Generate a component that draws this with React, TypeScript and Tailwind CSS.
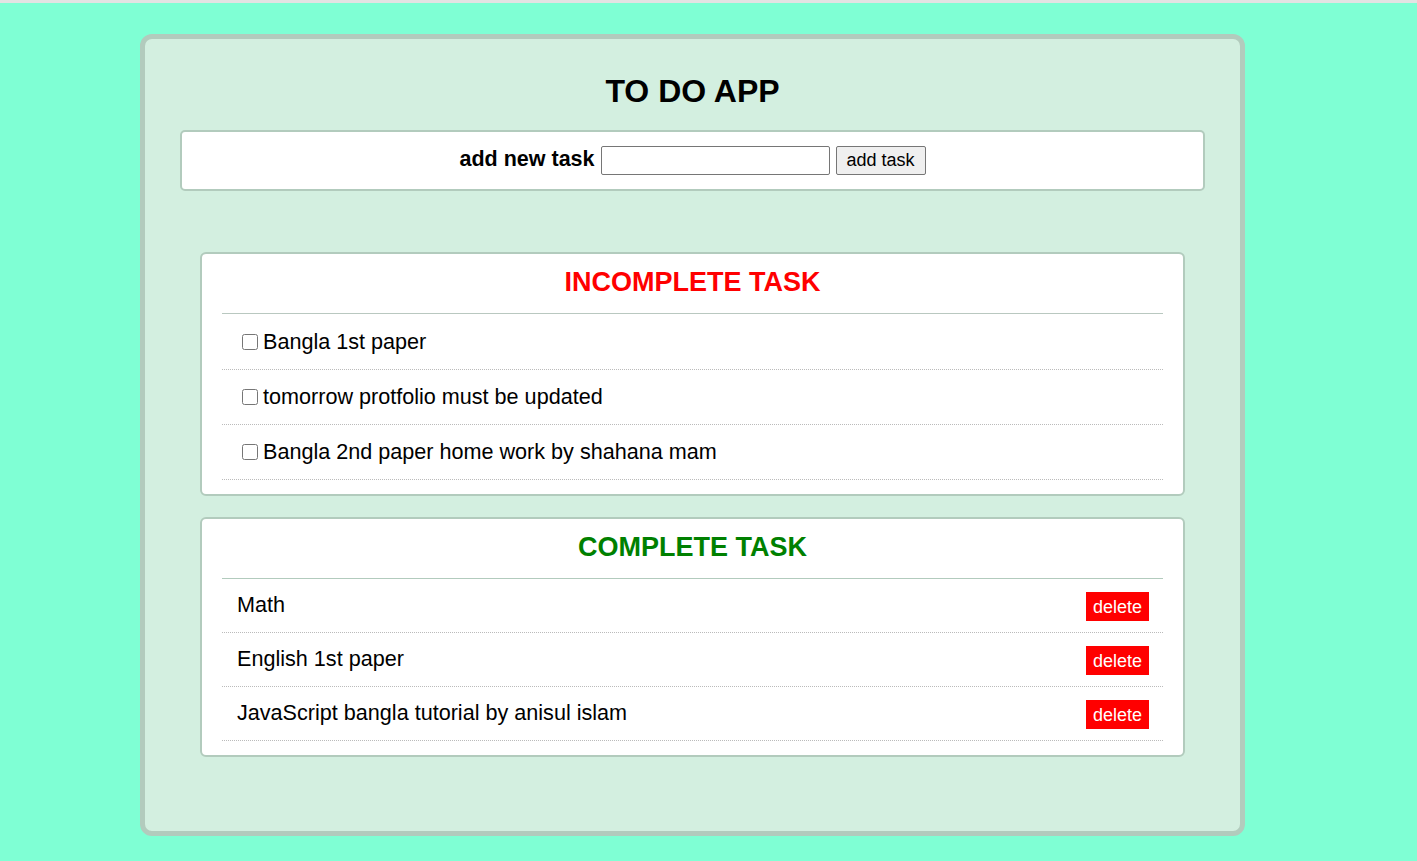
import React from "react";

const incomplete = [
  "Bangla 1st paper",
  "tomorrow protfolio must be updated",
  "Bangla 2nd paper home work by shahana mam",
];
const complete = ["Math", "English 1st paper", "JavaScript bangla tutorial by anisul islam"];

export default function App() {
  return (
    <div className="min-h-[861px] w-full bg-[#7fffd4] font-['Liberation_Sans',Arial,sans-serif] text-black">
      <div className="h-[3px] w-full bg-[#e3e3e3]" />
      <div className="pt-[31px]">
        <div className="ml-[140px] h-[802px] w-[1105px] rounded-[12px] border-[5px] border-[#b2cbbd] bg-[#d3efe0] px-[35px] pt-[34px]">
          <h1 className="text-center text-[32px] font-bold leading-[37px]">TO DO APP</h1>
          <div className="mt-[20px] flex h-[61px] items-center justify-center rounded-[5px] border-2 border-[#b2cbbd] bg-white">
            <label className="-mt-[2px] text-[21.5px] font-bold">add new task</label>
            <input
              type="text"
              className="ml-[6px] h-[29px] w-[229px] rounded-[2px] border border-[#767676] bg-white px-1"
            />
            <button className="ml-[6px] h-[29px] w-[90px] rounded-[2px] border border-[#767676] bg-[#efefef] pb-[2px] text-[18px] leading-none">
              add task
            </button>
          </div>

          <div className="mx-[20px] mt-[61px] rounded-[6px] border-2 border-[#b2cbbd] bg-white px-[20px] pb-[14px] pt-[13px]">
            <h2 className="text-center text-[27px] font-bold leading-[30px] text-[#ff0000]">INCOMPLETE TASK</h2>
            <div className="mt-[16px] border-t border-[#b9c8c0] pt-[1px]">
              {incomplete.map((t) => (
                <div key={t} className="flex h-[55px] items-center border-b border-dotted border-[#bbbbbb] pl-[15px]">
                  <input type="checkbox" className="ml-[5px] mr-[5px] h-[16px] w-[16px]" />
                  <span className="text-[21.6px]">{t}</span>
                </div>
              ))}
            </div>
          </div>

          <div className="mx-[20px] mt-[21px] rounded-[6px] border-2 border-[#b2cbbd] bg-white px-[20px] pb-[14px] pt-[13px]">
            <h2 className="text-center text-[27px] font-bold leading-[30px] text-[#008000]">COMPLETE TASK</h2>
            <div className="mt-[16px] border-t border-[#b2cbbd]">
              {complete.map((t) => (
                <div key={t} className="flex h-[54px] items-center justify-between border-b border-dotted border-[#bbbbbb] pl-[15px] pr-[14px]">
                  <span className="-mt-[1px] text-[21.6px]">{t}</span>
                  <button className="mt-[2px] h-[29px] w-[63px] bg-[#ff0000] text-[18px] leading-none text-white">delete</button>
                </div>
              ))}
            </div>
          </div>
        </div>
      </div>
    </div>
  );
}
